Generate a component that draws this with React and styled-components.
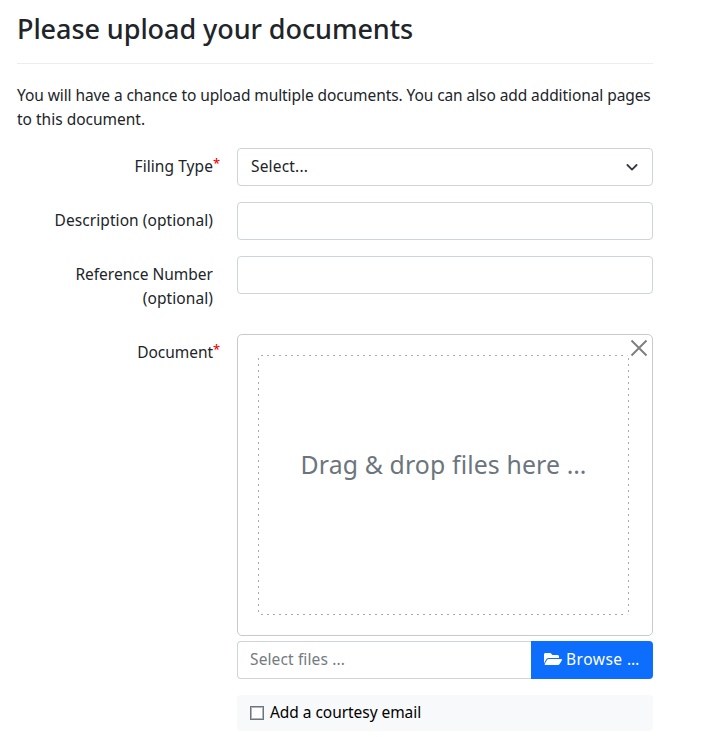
import React from 'react';
import styled, { createGlobalStyle } from 'styled-components';

const GlobalStyle = createGlobalStyle`
  *, *::before, *::after { box-sizing: border-box; }
  body {
    margin: 0;
    background: #fff;
    color: #212529;
    font-family: "Noto Sans", "Open Sans", sans-serif;
    font-size: 15.5px;
    line-height: 24px;
  }
`;

const Text = styled.span`
  letter-spacing: ${({ $track = 0 }) => $track}px;
`;

const Page = styled.main`
  width: 653px;
  padding: 12px 0 0 17px;
`;

const Title = styled.h2`
  margin: 0;
  height: 51px;
  font-size: 27px;
  font-weight: 540;
  line-height: 34px;
  letter-spacing: -0.07px;
  white-space: nowrap;
`;

const Divider = styled.hr`
  margin: 0 0 19px;
  border: 0;
  height: 1px;
  background: #ededee;
`;

const Intro = styled.p`
  margin: 0 0 17px;
  white-space: nowrap;
`;

const Form = styled.form`
  display: flex;
  flex-direction: column;
  gap: 16px;
`;

const Row = styled.div`
  display: grid;
  grid-template-columns: 196px 416px;
  column-gap: 24px;
  align-items: start;
`;

const Label = styled.label`
  display: flex;
  flex-direction: column;
  align-items: flex-end;
  padding: ${({ $long }) => ($long ? '6px 0 8px' : '6px 0')};
  white-space: nowrap;
`;

const LabelLine = styled.span`
  display: flex;
  letter-spacing: ${({ $track = 0 }) => $track}px;
`;

const Required = styled.span`
  width: 7px;
  margin-right: -7px;
  color: #f00;
  font-size: 13px;
  font-weight: 500;
  line-height: 19px;
`;

const Field = styled.input`
  display: block;
  width: 100%;
  height: 38px;
  padding: 6px 12px;
  border: 1px solid #ced4da;
  border-radius: 4px;
  background: #fff;
  font: inherit;
  outline: none;
`;

const SelectBox = styled.div`
  display: flex;
  align-items: center;
  justify-content: space-between;
  height: 38px;
  padding: 0 12px 2px 13px;
  border: 1px solid #ced4da;
  border-radius: 4px;
`;

const Chevron = styled.svg`
  width: 16px;
  height: 12px;
  margin-top: 2px;
`;

const DropPanel = styled.div`
  position: relative;
  height: 302px;
  padding: 20px 23px 20px 20px;
  border: 1px solid #c8c9ca;
  border-radius: 5px;
`;

const dashes = (direction) =>
  `repeating-linear-gradient(${direction}, transparent 0 3px, #aaa 3px 5px, transparent 5px 6px)`;

const DropZone = styled.div`
  height: 260px;
  border-radius: 4px;
  background:
    ${dashes('to right')} top / 100% 1px no-repeat,
    ${dashes('to right')} bottom / 100% 1px no-repeat,
    ${dashes('to bottom')} left / 1px 100% no-repeat,
    ${dashes('to bottom')} right / 1px 100% no-repeat;
  padding-top: 91px;
  color: #6c757d;
  font-size: 24.8px;
  line-height: 36px;
  text-align: center;
  white-space: nowrap;
`;

const CloseButton = styled.button`
  position: absolute;
  top: 4px;
  right: 4px;
  width: 18px;
  height: 18px;
  padding: 0;
  border: 0;
  background: none;
  svg { display: block; }
`;

const FileGroup = styled.div`
  display: flex;
  height: 38px;
  margin-top: 5px;
`;

const FileCaption = styled.div`
  flex: 1;
  padding: 5px 12px;
  border: 1px solid #ced4da;
  border-right: 0;
  border-radius: 4px 0 0 4px;
  color: #757b81;
`;

const BrowseButton = styled.button`
  display: flex;
  align-items: center;
  gap: 4px;
  width: 122px;
  padding: 0 13px 2px;
  border: 0;
  border-radius: 0 4px 4px 0;
  background: #0d6efd;
  color: #fff;
  font: inherit;
  white-space: nowrap;
`;

const FolderIcon = styled.svg`
  flex: none;
  width: 18px;
  height: 16px;
`;

const Courtesy = styled.label`
  display: flex;
  align-items: center;
  gap: 6px;
  height: 36px;
  margin-top: 16px;
  padding: 0 13px;
  border-radius: 4px;
  background: #f8f9fa;
  color: #000;
`;

const Box = styled.span`
  width: 14px;
  height: 14px;
  border: 1px solid #6c757d;
  box-shadow: inset 0 0 0 1px #b0b5ba;
  background: #fff;
`;

const CourtesyText = styled(Text)`
  padding-bottom: 2px;
`;

export default function App() {
  return (
    <>
      <GlobalStyle />
      <Page>
        <Title>Please upload your documents</Title>
        <Divider />
        <Intro>
          <Text $track={-0.085}>
            You will have a chance to upload multiple documents. You can also add additional pages
          </Text>
          <br />
          <Text>to this document.</Text>
        </Intro>
        <Form>
          <Row>
            <Label>
              <LabelLine $track={0.07}>Filing Type<Required>*</Required></LabelLine>
            </Label>
            <SelectBox>
              <Text $track={0.18}>Select...</Text>
              <Chevron viewBox="0 0 16 12" fill="none" stroke="#343a40" strokeWidth="1.8" strokeLinecap="round" strokeLinejoin="round">
                <path d="M3.4 4l4.6 4.6 4.6-4.6" />
              </Chevron>
            </SelectBox>
          </Row>
          <Row>
            <Label><LabelLine $track={0.07}>Description (optional)</LabelLine></Label>
            <Field />
          </Row>
          <Row>
            <Label $long>
              <LabelLine>Reference Number</LabelLine>
              <LabelLine $track={0.08}>(optional)</LabelLine>
            </Label>
            <Field />
          </Row>
          <Row>
            <Label>
              <LabelLine $track={-0.05}>Document<Required>*</Required></LabelLine>
            </Label>
            <div>
              <DropPanel>
                <DropZone><Text $track={0.14}>Drag &amp; drop files here …</Text></DropZone>
                <CloseButton type="button" aria-label="Close">
                  <svg width="18" height="18" viewBox="0 0 18 18" stroke="#808080" strokeWidth="2">
                    <path d="M1.5 1.5l15 15M16.5 1.5l-15 15" />
                  </svg>
                </CloseButton>
              </DropPanel>
              <FileGroup>
                <FileCaption><Text $track={0.12}>Select files ...</Text></FileCaption>
                <BrowseButton type="button">
                  <FolderIcon viewBox="0 0 576 512" fill="#fff">
                    <path d="M572.694 292.093L500.27 416.248A63.997 63.997 0 0 1 444.989 448H45.025c-18.523 0-30.064-20.093-20.731-36.093l72.424-124.155A64 64 0 0 1 152 256h399.964c18.523 0 30.064 20.093 20.73 36.093zM152 224h328v-48c0-26.51-21.49-48-48-48H272l-64-64H48C21.49 64 0 85.49 0 112v278.046l69.077-118.418C86.214 242.25 117.989 224 152 224z" />
                  </FolderIcon>
                  <Text $track={0.5}>Browse …</Text>
                </BrowseButton>
              </FileGroup>
              <Courtesy>
                <Box />
                <CourtesyText $track={-0.05}>Add a courtesy email</CourtesyText>
              </Courtesy>
            </div>
          </Row>
        </Form>
      </Page>
    </>
  );
}
